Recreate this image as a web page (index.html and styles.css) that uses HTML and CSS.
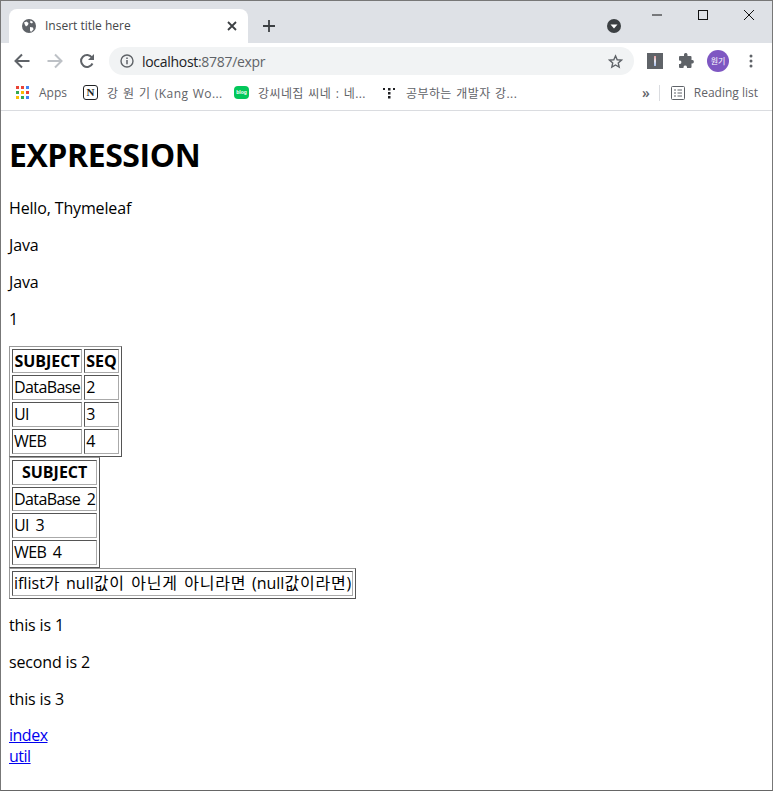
FILE: index.html
```html
<!DOCTYPE html>
<html lang="ko">
<head>
<meta charset="utf-8">
<title>Insert title here</title>
<link rel="stylesheet" href="styles.css">
</head>
<body>
<div class="window">
  <header class="chrome">
    <div class="titlebar">
      <div class="tab">
        <svg class="favicon" width="16" height="16" viewBox="0 0 16 16"><circle cx="8" cy="8" r="7" fill="#5f6368"/><path d="M3 4.500l2.500-1 2 1.500-.5 2-2 1.500-1-1.500zM9 9l3 .5.5 2-2.500 2.500-1-1.500zM9.500 2.500l2.500 1.500-1 1.500-2-1z" fill="#fff"/></svg>
        <span class="tab-title">Insert title here</span>
        <svg class="tab-close" width="10" height="10" viewBox="0 0 10 10"><path d="M1 1l8 8M9 1l-8 8" stroke="#3c4043" stroke-width="1.800"/></svg>
      </div>
      <svg class="newtab" width="12" height="12" viewBox="0 0 12 12"><path d="M6 0v12M0 6h12" stroke="#3c4043" stroke-width="1.800"/></svg>
      <div class="spacer"></div>
      <svg class="profile-drop" width="14" height="14" viewBox="0 0 14 14"><circle cx="7" cy="7" r="7" fill="#3c4043"/><path d="M3.500 5.500h7L7 9.500z" fill="#fff"/></svg>
      <div class="winctl">
        <svg width="10" height="10" viewBox="0 0 10 10"><path d="M0 5h10" stroke="#111" stroke-width="1"/></svg>
        <svg width="10" height="10" viewBox="0 0 10 10"><rect x=".5" y=".5" width="9" height="9" fill="none" stroke="#111"/></svg>
        <svg width="10" height="10" viewBox="0 0 10 10"><path d="M0 0l10 10M10 0L0 10" stroke="#111" stroke-width="1"/></svg>
      </div>
    </div>
    <div class="toolbar">
      <svg class="nav" width="16" height="16" viewBox="0 0 16 16"><path d="M15.500 8H2M8 1.500L1.500 8 8 14.500" fill="none" stroke="#5f6368" stroke-width="2"/></svg>
      <svg class="nav" width="16" height="16" viewBox="0 0 16 16"><path d="M.5 8H14M8 1.500L14.500 8 8 14.500" fill="none" stroke="#bdc1c6" stroke-width="2"/></svg>
      <svg class="nav" width="16" height="16" viewBox="0 0 16 16"><path d="M13.500 10.500A6 6 0 1 1 13 4.500" fill="none" stroke="#5f6368" stroke-width="2"/><path d="M15 1v6H9z" fill="#5f6368"/></svg>
      <div class="omnibox">
        <svg width="14" height="14" viewBox="0 0 14 14"><circle cx="7" cy="7" r="6" fill="none" stroke="#5f6368" stroke-width="1.400"/><path d="M7 6v4.200M7 3.500v1.500" stroke="#5f6368" stroke-width="1.500"/></svg>
        <span class="url">localhost<span class="url-rest">:8787/expr</span></span>
        <svg class="star" width="15" height="15" viewBox="0 0 24 24"><path d="M12 3l2.700 6.200 6.800.6-5.100 4.500 1.500 6.700L12 17.500 6.100 21l1.500-6.700L2.500 9.800l6.800-.6z" fill="none" stroke="#5f6368" stroke-width="2.200"/></svg>
      </div>
      <div class="ext-i"><span class="ext-bar"></span></div>
      <svg class="puzzle" width="16" height="16" viewBox="0 0 16 16"><path d="M6 1.500a1.800 1.800 0 0 1 3.500 0V3h3a1 1 0 0 1 1 1v3h1a1.800 1.800 0 0 1 0 3.500h-1V14a1 1 0 0 1-1 1H9v-1a1.800 1.800 0 0 0-3.500 0v1H2a1 1 0 0 1-1-1v-3h1a1.800 1.800 0 0 0 0-3.500H1V4a1 1 0 0 1 1-1h4z" fill="#5f6368"/></svg>
      <div class="avatar">원기</div>
      <svg class="dots" width="4" height="14" viewBox="0 0 4 14"><circle cx="2" cy="2" r="1.500" fill="#5f6368"/><circle cx="2" cy="7" r="1.500" fill="#5f6368"/><circle cx="2" cy="12" r="1.500" fill="#5f6368"/></svg>
    </div>
    <div class="bookmarks">
      <div class="bm bm-apps">
        <svg width="14" height="14" viewBox="0 0 14 14">
          <rect x="0" y="0" width="3" height="3" fill="#ea4335"/><rect x="5" y="0" width="3" height="3" fill="#ea4335"/><rect x="10" y="0" width="3" height="3" fill="#4285f4"/>
          <rect x="0" y="5" width="3" height="3" fill="#34a853"/><rect x="5" y="5" width="3" height="3" fill="#fbbc04"/><rect x="10" y="5" width="3" height="3" fill="#ea4335"/>
          <rect x="0" y="10" width="3" height="3" fill="#fbbc04"/><rect x="5" y="10" width="3" height="3" fill="#34a853"/><rect x="10" y="10" width="3" height="3" fill="#4285f4"/>
        </svg>
        <span>Apps</span>
      </div>
      <div class="bm bm-notion">
        <div class="notion">N</div>
        <span class="bm-ko">강 원 기 (Kang Wo...</span>
      </div>
      <div class="bm bm-blog">
        <div class="blog">blog</div>
        <span class="bm-ko">강씨네집 씨네 : 네...</span>
      </div>
      <div class="bm bm-dev">
        <svg width="12" height="14" viewBox="0 0 12 14"><g fill="#202124"><rect x="0" y="2" width="2" height="2"/><rect x="5" y="2" width="2.500" height="2.500"/><rect x="10" y="2" width="2" height="2"/><rect x="5" y="6" width="2.500" height="2.500"/><rect x="5" y="10" width="2.500" height="2.500"/></g></svg>
        <span class="bm-ko">공부하는 개발자 강...</span>
      </div>
      <div class="spacer"></div>
      <span class="more">»</span>
      <div class="sep"></div>
      <svg class="reading" width="14" height="14" viewBox="0 0 14 14"><rect x=".5" y=".5" width="13" height="13" rx="1" fill="none" stroke="#5f6368"/><path d="M3 4h2M3 7h2M3 10h2M6.500 4H11M6.500 7H11M6.500 10H11" stroke="#5f6368"/></svg>
      <span class="reading-label">Reading list</span>
    </div>
  </header>
  <main class="page">
    <h1>EXPRESSION</h1>
    <p>Hello, Thymeleaf</p>
    <p>Java</p>
    <p>Java</p>
    <p>1</p>
    <table class="bt">
      <tr><th>SUBJECT</th><th>SEQ</th></tr>
      <tr><td>DataBase</td><td>2</td></tr>
      <tr><td>UI</td><td>3</td></tr>
      <tr><td>WEB</td><td>4</td></tr>
    </table>
    <table class="bt">
      <tr><th>SUBJECT</th></tr>
      <tr><td>DataBase 2</td></tr>
      <tr><td>UI 3</td></tr>
      <tr><td>WEB 4</td></tr>
    </table>
    <table class="bt">
      <tr><td class="long">iflist<span class="ko">가</span> null<span class="ko">값이 아닌게 아니라면</span> (null<span class="ko">값이라면</span>)</td></tr>
    </table>
    <p>this is 1</p>
    <p>second is 2</p>
    <p class="last">this is 3</p>
    <a class="lnk" href="#">index</a><br>
    <a class="lnk" href="#">util</a>
  </main>
</div>
</body>
</html>
```
FILE: styles.css
```css
html, body { margin: 0; padding: 0; background: #fff; }
.window {
  box-sizing: border-box;
  width: 773px;
  height: 791px;
  border: 1px solid #777;
  border-bottom-color: #666;
  overflow: hidden;
  font-family: "Open Sans", "Noto Sans CJK KR", sans-serif;
}
.spacer { flex: 1; }

/* browser chrome */
.chrome { border-bottom: 1px solid #dadce0; }
.titlebar {
  height: 42px;
  background: #dee1e6;
  display: flex;
  align-items: flex-end;
}
.tab {
  width: 239px;
  height: 34px;
  margin-left: 8px;
  background: #fff;
  border-radius: 8px 8px 0 0;
  display: flex;
  align-items: center;
  box-sizing: border-box;
  padding: 0 11px 1px 12px;
}
.favicon { flex: none; }
.tab-title { margin-left: 8px; font-size: 12px; color: #45474a; flex: 1; }
.newtab { margin: 0 0 11px 15px; }
.profile-drop { margin: 0 31px 10px 0; }
.winctl {
  align-self: flex-start;
  display: flex;
  gap: 36px;
  margin: 9px 18px 0 0;
}
.toolbar {
  height: 34px;
  box-sizing: border-box;
  padding: 2px 0 0 13px;
  background: #fff;
  display: flex;
  align-items: center;
}
.nav { margin-right: 17px; flex: none; }
.nav:nth-child(2) { margin-right: 16px; }
.nav:nth-child(3) { margin-right: 14px; }
.omnibox {
  width: 525px;
  height: 28px;
  border-radius: 14px;
  background: #f1f3f4;
  display: flex;
  align-items: center;
  box-sizing: border-box;
  padding: 0 11px 0 11px;
}
.url { margin-left: 8px; font-size: 14px; letter-spacing: -0.3px; color: #202124; flex: 1; }
.url-rest { color: #5f6368; }
.ext-i {
  width: 16px;
  height: 16px;
  margin-left: 13px;
  background: #5f6368;
  display: flex;
  align-items: center;
  justify-content: center;
}
.ext-bar {
  width: 2px;
  height: 10px;
  background: linear-gradient(#e8a0a0, #e8e8f0 50%, #a0b8e8);
}
.puzzle { margin-left: 15px; }
.avatar {
  width: 22px;
  height: 22px;
  margin-left: 13px;
  border-radius: 50%;
  background: #7e57c2;
  color: #fff;
  font-size: 8px;
  line-height: 22px;
  text-align: center;
  font-family: "Noto Sans CJK KR", sans-serif;
}
.dots { margin-left: 20px; }
.bookmarks {
  height: 33px;
  box-sizing: border-box;
  padding-bottom: 2px;
  background: #fff;
  display: flex;
  align-items: center;
  font-size: 12px;
  color: #5f6368;
  white-space: nowrap;
}
.bm { display: flex; align-items: center; gap: 9px; }
.bm-ko { letter-spacing: 0.4px; word-spacing: 1px; }
.bm-apps { margin-left: 15px; width: 67px; }
.bm-notion { width: 151px; }
.bm-blog { width: 149px; }
.bm-dev { gap: 11px; }
.notion {
  width: 13px;
  height: 13px;
  border: 1.500px solid #202124;
  border-radius: 3px;
  font: bold 11px/13px "Liberation Serif", serif;
  color: #202124;
  text-align: center;
}
.blog {
  width: 15px;
  height: 13px;
  border-radius: 4px;
  background: #03c75a;
  color: #fff;
  font: bold 5px/13px "Liberation Sans", sans-serif;
  text-align: center;
}
.more { font-size: 14px; font-weight: 600; margin-right: 9px; }
.sep { width: 1px; height: 16px; background: #dadce0; margin-right: 11px; }
.reading { margin-right: 9px; }
.reading-label { margin-right: 14px; }

/* page content */
.page {
  padding: 0 8px;
  font-size: 16px;
  line-height: 20.800px;
  color: #000;
}
.page h1 {
  font-size: 32px;
  line-height: 43px;
  font-weight: 700;
  letter-spacing: -0.450px;
  margin: 22px 0 21.600px;
}
.page p { margin: 16px 0; line-height: 21px; letter-spacing: -0.150px; }
.page p.last { margin-bottom: 15px; }
.lnk { letter-spacing: -0.500px; }
.bt {
  border: 1px solid;
  border-color: #999 #555 #555 #999;
  border-spacing: 2px;
  border-collapse: separate;
}
.bt th, .bt td {
  border: 1px solid;
  border-color: #555 #aaa #aaa #555;
  padding: 1px;
}
.bt td { letter-spacing: -0.600px; word-spacing: 3px; }
.bt td.long { letter-spacing: 0; word-spacing: 1.500px; }
.ko { letter-spacing: 0.800px; }
```
